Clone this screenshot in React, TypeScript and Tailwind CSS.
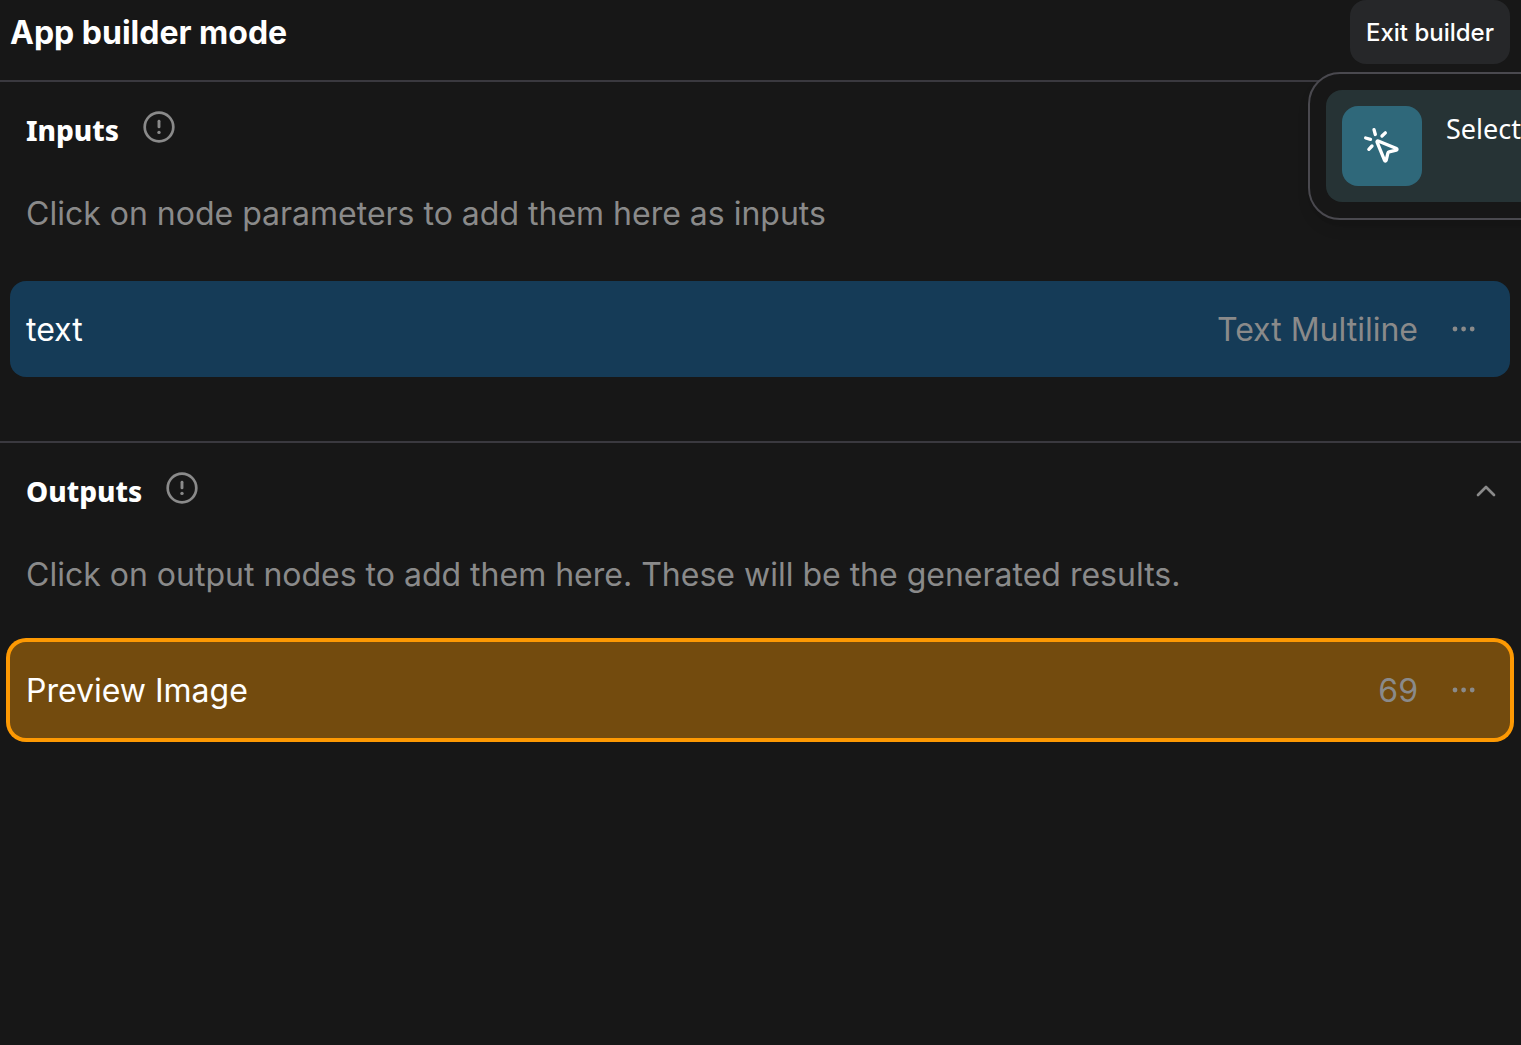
import React from "react";
import { ChevronUp, MousePointerClick } from "lucide-react";

function InfoIcon() {
  return (
    <svg viewBox="0 0 32 32" className="size-8" fill="none" stroke="currentColor" aria-hidden="true">
      <circle cx="16" cy="16" r="14.3" strokeWidth="2.7" />
      <path d="M16 10.3v5.6" strokeWidth="2.9" strokeLinecap="round" />
      <circle cx="16" cy="21.4" r="1.7" fill="currentColor" stroke="none" />
    </svg>
  );
}

function Dots() {
  return (
    <svg viewBox="0 0 32 32" className="size-8" fill="currentColor" aria-hidden="true">
      <circle cx="7" cy="16" r="2.4" />
      <circle cx="15.6" cy="16" r="2.4" />
      <circle cx="24.2" cy="16" r="2.4" />
    </svg>
  );
}

type SectionProps = {
  title: string;
  hint: string;
  collapsible?: boolean;
  children: React.ReactNode;
};

function Section({ title, hint, collapsible, children }: SectionProps) {
  return (
    <section className="border-t-2 border-[#3a393f] pb-16">
      <div className="flex h-24 items-center pr-[19px] pl-6.5">
        <h2 className="font-['Noto_Sans',sans-serif] text-[28px] leading-8 font-extrabold text-white">{title}</h2>
        <button type="button" aria-label={`About ${title}`} className="mb-1.5 ml-6 text-[#8a8a8a]">
          <InfoIcon />
        </button>
        {collapsible && (
          <button type="button" aria-label={`Collapse ${title}`} className="ml-auto text-[#8a8a8a]">
            <ChevronUp className="size-8" />
          </button>
        )}
      </div>
      <p className="px-6.5 pt-3 pb-[43px] text-[32px] leading-12 text-[#8a8a8a]">{hint}</p>
      {children}
    </section>
  );
}

type RowProps = { name: string; detail: string; className: string };

function Row({ name, detail, className }: RowProps) {
  return (
    <div className={`mr-[11px] ml-2.5 flex h-24 items-center rounded-2xl pr-[30px] pl-4 text-[32px] leading-12 ${className}`}>
      <span className="pt-0.5 text-white">{name}</span>
      <span className="ml-auto pt-0.5 text-[#8a8a8a]">{detail}</span>
      <button type="button" aria-label={`Options for ${name}`} className="ml-[30px] text-[#8a8a8a]">
        <Dots />
      </button>
    </div>
  );
}

export default function App() {
  return (
    <main className="relative min-h-screen overflow-hidden bg-[#171717] font-['Inter',sans-serif]">
      <header className="flex items-start justify-between pr-[11px] pb-3.5 pl-2.5">
        <h1 className="text-[32px] leading-[66px] font-bold text-white">App builder mode</h1>
        <button type="button" className="h-16 rounded-2xl bg-[#262729] px-4 pt-0.5 text-2xl font-medium text-white">
          Exit builder
        </button>
      </header>

      <Section title="Inputs" hint="Click on node parameters to add them here as inputs">
        <Row name="text" detail="Text Multiline" className="bg-[#153b57]" />
      </Section>
      <Section title="Outputs" hint="Click on output nodes to add them here. These will be the generated results." collapsible>
        <Row name="Preview Image" detail="69" className="bg-[#734b0e] ring-4 ring-[#fd9903]" />
      </Section>

      <div className="absolute top-18 -right-10 w-[253px] rounded-[32px] border-2 border-[#4a494f] bg-[#171717] p-4 shadow-lg">
        <button type="button" className="flex w-full items-start rounded-2xl bg-[#263335] p-4 text-left">
          <span className="grid size-20 shrink-0 place-items-center rounded-2xl bg-[#2f687a] text-white">
            <MousePointerClick className="size-10" />
          </span>
          <span className="ml-6 pt-[3px] font-['Noto_Sans',sans-serif] text-[27px] leading-10 whitespace-nowrap text-white">
            Select
          </span>
        </button>
      </div>
    </main>
  );
}
